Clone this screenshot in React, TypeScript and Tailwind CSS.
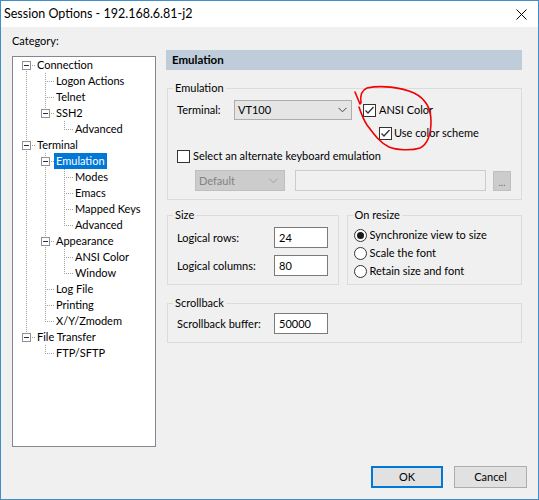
import React from "react";

type TreeNode = { label: string; selected?: boolean; children?: TreeNode[] };

type Row = {
  label: string;
  level: number;
  selected?: boolean;
  hasChildren: boolean;
  hasNext: boolean;
  firstRoot: boolean;
  cont: boolean[];
};

const tree: TreeNode[] = [
  {
    label: "Connection",
    children: [
      { label: "Logon Actions" },
      { label: "Telnet" },
      { label: "SSH2", children: [{ label: "Advanced" }] },
    ],
  },
  {
    label: "Terminal",
    children: [
      {
        label: "Emulation",
        selected: true,
        children: [{ label: "Modes" }, { label: "Emacs" }, { label: "Mapped Keys" }, { label: "Advanced" }],
      },
      { label: "Appearance", children: [{ label: "ANSI Color" }, { label: "Window" }] },
      { label: "Log File" },
      { label: "Printing" },
      { label: "X/Y/Zmodem" },
    ],
  },
  { label: "File Transfer", children: [{ label: "FTP/SFTP" }] },
];

function flatten(nodes: TreeNode[], level: number, cont: boolean[], out: Row[]) {
  nodes.forEach((n, i) => {
    const hasNext = i < nodes.length - 1;
    out.push({
      label: n.label,
      level,
      selected: n.selected,
      hasChildren: !!n.children,
      hasNext,
      firstRoot: level === 0 && i === 0,
      cont,
    });
    if (n.children) flatten(n.children, level + 1, [...cont, hasNext], out);
  });
  return out;
}

const rows = flatten(tree, 0, [], []);

const DOT = "#a0a0a0";

function TreeRow({ row }: { row: Row }) {
  const w = 22 + 19 * row.level;
  const cx = 13 + 19 * row.level;
  return (
    <div className="flex h-[16px] items-center">
      <svg width={w} height={16} className="shrink-0" shapeRendering="crispEdges">
        {row.cont.map((c, k) =>
          c ? (
            <line key={k} x1={13 + 19 * k + 0.5} y1={0} x2={13 + 19 * k + 0.5} y2={16} stroke={DOT} strokeDasharray="1 1" />
          ) : null
        )}
        {!row.firstRoot && <line x1={cx + 0.5} y1={0} x2={cx + 0.5} y2={8} stroke={DOT} strokeDasharray="1 1" />}
        {row.hasNext && <line x1={cx + 0.5} y1={8} x2={cx + 0.5} y2={16} stroke={DOT} strokeDasharray="1 1" />}
        <line x1={cx} y1={8.5} x2={cx + 9} y2={8.5} stroke={DOT} strokeDasharray="1 1" />
        {row.hasChildren && (
          <g>
            <rect x={cx - 3.5} y={4.5} width={8} height={8} fill="#fff" stroke="#919191" />
            <line x1={cx - 2} y1={8.5} x2={cx + 3} y2={8.5} stroke="#2b2b55" />
          </g>
        )}
      </svg>
      <span className={row.selected ? "h-[16px] bg-[#0078d7] px-[2px] text-white" : "h-[16px] px-[2px]"}>{row.label}</span>
    </div>
  );
}

function CheckBox({ checked }: { checked?: boolean }) {
  return (
    <span className="flex h-[13px] w-[13px] shrink-0 items-center justify-center border border-[#333] bg-white">
      {checked && (
        <svg width="11" height="11" viewBox="0 0 11 11">
          <path d="M1.5 5.5 L4 8 L9.5 2" fill="none" stroke="#333" strokeWidth="1.3" />
        </svg>
      )}
    </span>
  );
}

function Radio({ checked }: { checked?: boolean }) {
  return (
    <span className="flex h-[13px] w-[13px] shrink-0 items-center justify-center rounded-full border border-[#333] bg-white">
      {checked && <span className="h-[7px] w-[7px] rounded-full bg-[#1a1a1a]" />}
    </span>
  );
}

function Chevron({ color }: { color: string }) {
  return (
    <svg width="9" height="6" viewBox="0 0 9 6">
      <path d="M0.5 0.8 L4.5 4.8 L8.5 0.8" fill="none" stroke={color} strokeWidth="1" />
    </svg>
  );
}

function TextBox({ value }: { value: string }) {
  return (
    <div className="flex h-[21px] w-[54px] items-center border border-[#7a7a7a] bg-white pl-[4px]">{value}</div>
  );
}

export default function App() {
  return (
    <div className="relative h-[500px] w-[539px] overflow-hidden border border-[#3d8ec9] bg-[#f0f0f0] text-[11px] leading-[16px] text-black [font-family:Lato,sans-serif]">
      {/* title bar */}
      <div className="flex h-[26px] items-center justify-between bg-white pl-[3px] pr-[11px]">
        <span className="text-[12.5px]">Session Options - 192.168.6.81-j2</span>
        <svg width="11" height="11" viewBox="0 0 11 11">
          <path d="M0.5 0.5 L10.5 10.5 M10.5 0.5 L0.5 10.5" stroke="#000" strokeWidth="1" />
        </svg>
      </div>

      <div className="flex items-start">
        {/* category tree */}
        <div className="ml-[11px] w-[144px] pt-[6px]">
          <div className="h-[16px]">Category:</div>
          <div className="mt-[7px] h-[391px] border border-[#828790] bg-white">
            {rows.map((r, i) => (
              <TreeRow key={i} row={r} />
            ))}
          </div>
        </div>

        {/* right panel */}
        <div className="ml-[10px] w-[356px] pt-[23px]">
          <div className="h-[20px] bg-[#bfcddb] pl-[6px] text-[11.5px] font-bold leading-[20px]">Emulation</div>

          <fieldset className="mt-[10px] ml-px w-[355px] border border-[#dcdcdc] pb-[8px]">
            <legend className="ml-[5px] px-[2px] leading-[16px]">Emulation</legend>
            <div className="mt-[4px] flex items-start pl-[9px]">
              <div className="flex h-[20px] w-[57px] items-center">Terminal:</div>
              <div className="flex h-[20px] w-[118px] items-center justify-between border border-[#adadad] bg-[#e5e5e5] pl-[3px] pr-[4px]">
                <span>VT100</span>
                <Chevron color="#444" />
              </div>
              <div className="ml-[11px]">
                <div className="flex h-[20px] items-center gap-[3px]">
                  <CheckBox checked />
                  <span>ANSI Color</span>
                </div>
                <div className="mt-[5px] flex h-[16px] items-center gap-[2px] pl-[16px]">
                  <CheckBox checked />
                  <span>Use color scheme</span>
                </div>
              </div>
            </div>
            <div className="mt-[7px] flex h-[16px] items-center gap-[3px] pl-[9px]">
              <CheckBox />
              <span>Select an alternate keyboard emulation</span>
            </div>
            <div className="mt-[6px] flex items-center pl-[27px]">
              <div className="flex h-[21px] w-[90px] items-center justify-between border border-[#bfbfbf] bg-[#cccccc] pl-[3px] pr-[6px] text-[#838383]">
                <span>Default</span>
                <Chevron color="#a0a0a0" />
              </div>
              <div className="ml-[10px] h-[21px] w-[191px] border border-[#cccccc] bg-[#f0f0f0]" />
              <div className="ml-[7px] flex h-[20px] w-[18px] items-end justify-center border border-[#bfbfbf] bg-[#cccccc] pb-[3px] text-[10px] leading-[10px] text-[#6d6d6d]">
                ...
              </div>
            </div>
          </fieldset>

          <div className="mt-[7px] ml-px flex gap-[8px]">
            <fieldset className="w-[172px] border border-[#dcdcdc] pb-[8px]">
              <legend className="ml-[5px] px-[2px] leading-[16px]">Size</legend>
              <div className="mt-[4px] flex items-center pl-[9px]">
                <span className="w-[97px]">Logical rows:</span>
                <TextBox value="24" />
              </div>
              <div className="mt-[7px] flex items-center pl-[9px]">
                <span className="w-[97px]">Logical columns:</span>
                <TextBox value="80" />
              </div>
            </fieldset>
            <fieldset className="w-[176px] border border-[#dcdcdc]">
              <legend className="ml-[5px] px-[2px] leading-[16px]">On resize</legend>
              <div className="mt-[3px] pl-[6px]">
                <div className="flex h-[18px] items-center gap-[3px]">
                  <Radio checked />
                  <span>Synchronize view to size</span>
                </div>
                <div className="flex h-[18px] items-center gap-[3px]">
                  <Radio />
                  <span>Scale the font</span>
                </div>
                <div className="flex h-[18px] items-center gap-[3px]">
                  <Radio />
                  <span>Retain size and font</span>
                </div>
              </div>
            </fieldset>
          </div>

          <fieldset className="mt-[10px] ml-px w-[355px] border border-[#dcdcdc] pb-[8px]">
            <legend className="ml-[5px] px-[2px] leading-[16px]">Scrollback</legend>
            <div className="mt-[2px] flex items-center pl-[9px]">
              <span className="w-[97px]">Scrollback buffer:</span>
              <TextBox value="50000" />
            </div>
          </fieldset>
        </div>
      </div>

      {/* buttons */}
      <div className="mt-[19px] flex justify-end gap-[11px] pr-[11px]">
        <button className="flex h-[22px] w-[72px] items-center justify-center border-2 border-[#0078d7] bg-[#e1e1e1]">
          OK
        </button>
        <button className="flex h-[22px] w-[73px] items-center justify-center border border-[#adadad] bg-[#e1e1e1]">
          Cancel
        </button>
      </div>

      {/* red hand-drawn annotation */}
      <svg className="pointer-events-none absolute left-0 top-0" width="539" height="500">
        <path
          d="M354 91 L359 103 M360 102 C359 95 361 89 366 87 C380 84 400 86 413 92 C425 98 430 108 430 120 C430 132 427 143 419 147 C410 150 395 149 388 146 C378 141 372 132 366 124 C362 118 360 112 358 106"
          fill="none"
          stroke="#f00000"
          strokeWidth="1.6"
          strokeLinecap="round"
          strokeLinejoin="round"
        />
      </svg>
    </div>
  );
}
